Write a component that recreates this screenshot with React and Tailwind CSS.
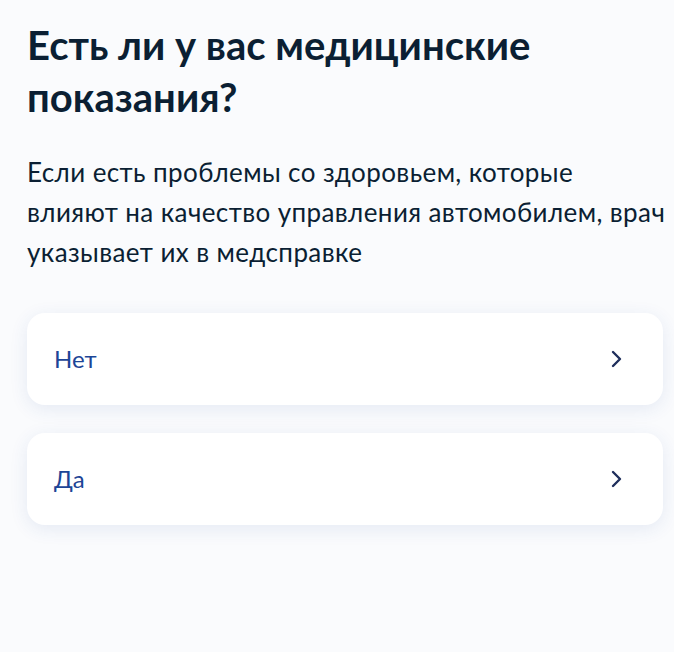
const options = ["Нет", "Да"];

function Chevron() {
  return (
    <svg width="11" height="18" viewBox="0 0 11 18" fill="none" aria-hidden="true">
      <path d="M2 2l7 7-7 7" stroke="#1f2f5c" strokeWidth="2.4" strokeLinecap="round" strokeLinejoin="round" />
    </svg>
  );
}

export default function App() {
  return (
    <div
      className="min-h-[652px] w-[674px] bg-[#fafbfd] pl-[27px] pt-[19px]"
      style={{ fontFamily: "Lato, 'Noto Sans', sans-serif" }}
    >
      <h1 className="text-[40px] font-bold leading-[52px] text-[#0b1f33]">
        Есть ли у вас медицинские показания?
      </h1>
      <p className="mt-[29px] whitespace-nowrap text-[26px] leading-[40px] tracking-[0.4px] text-[#0b1f33]">
        Если есть проблемы со здоровьем, которые
        <br />
        влияют на качество управления автомобилем, врач
        <br />
        указывает их в медсправке
      </p>
      <ul className="mt-[41px] w-[636px] space-y-[28px]">
        {options.map((label) => (
          <li
            key={label}
            className="flex h-[92px] items-center justify-between rounded-[18px] bg-white pl-[27px] pr-[41px] shadow-[0_4px_18px_rgba(40,80,160,0.10)]"
          >
            <span className="text-[24px] text-[#1d4596]">{label}</span>
            <Chevron />
          </li>
        ))}
      </ul>
    </div>
  );
}
